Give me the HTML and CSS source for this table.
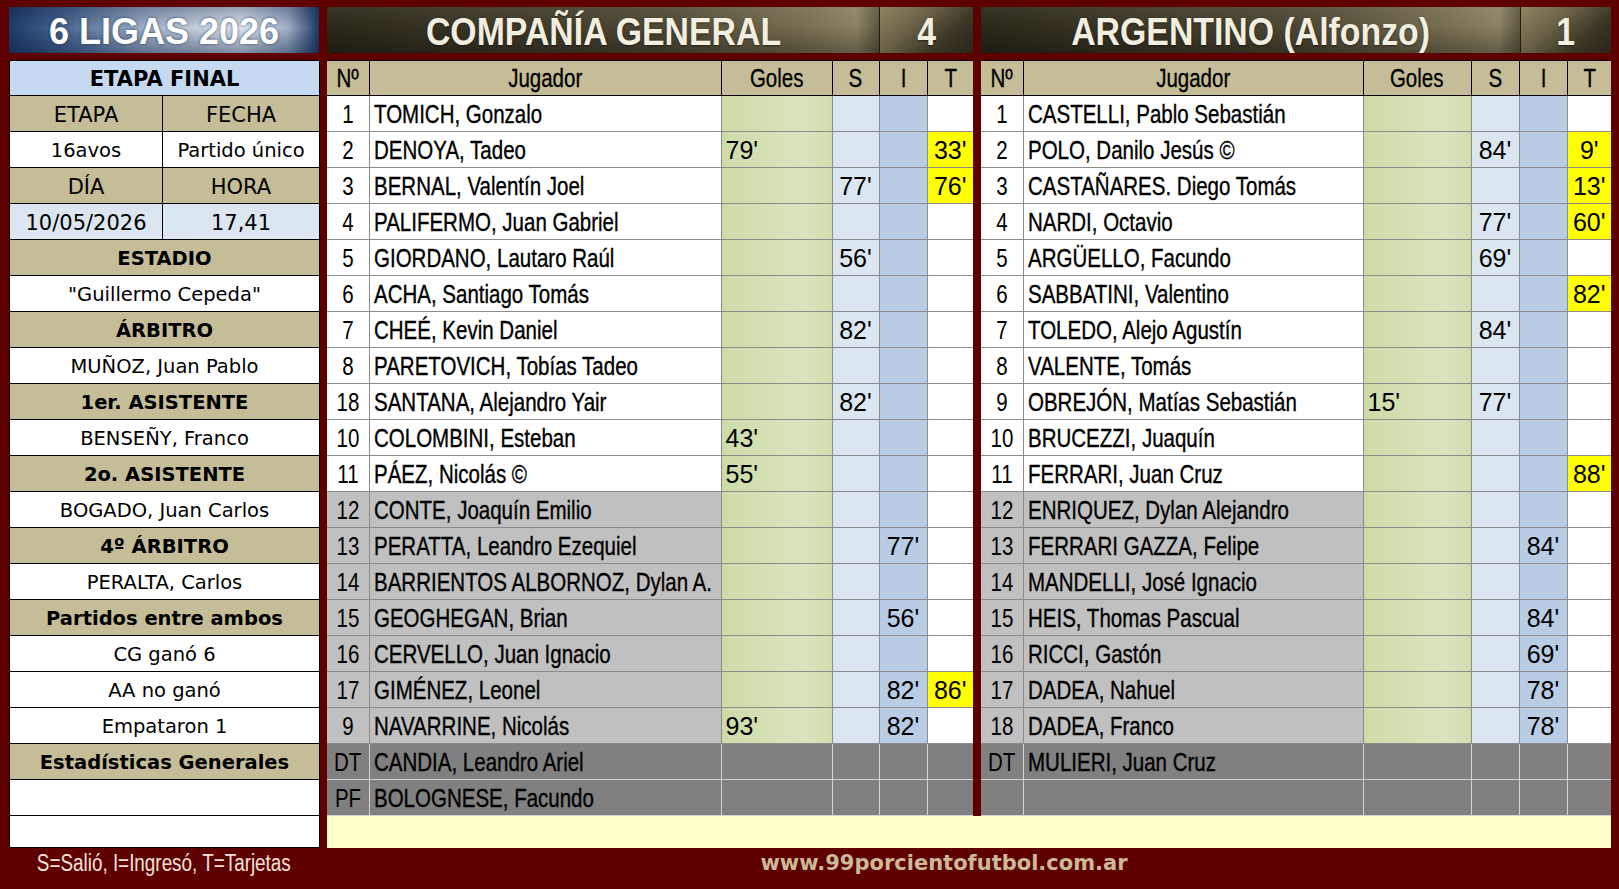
FILE: index.html
```html
<!DOCTYPE html>
<html lang="es">
<head>
<meta charset="utf-8">
<title>6 LIGAS 2026 - Compañía General vs Argentino</title>
<link rel="stylesheet" href="styles.css">
</head>
<body>
<div class="board">
  <section class="info">
    <h1 class="league">6 LIGAS 2026</h1>
    <table class="info-table">
      <colgroup><col class="ic1"><col class="ic2"></colgroup>
      <tr class="stage"><td colspan="2">ETAPA FINAL</td></tr>
      <tr class="lab"><td>ETAPA</td><td>FECHA</td></tr>
      <tr><td>16avos</td><td>Partido único</td></tr>
      <tr class="lab"><td>DÍA</td><td>HORA</td></tr>
      <tr class="date"><td>10/05/2026</td><td>17,41</td></tr>
      <tr class="sec"><td colspan="2">ESTADIO</td></tr>
      <tr><td colspan="2">"Guillermo Cepeda"</td></tr>
      <tr class="sec"><td colspan="2">ÁRBITRO</td></tr>
      <tr><td colspan="2">MUÑOZ, Juan Pablo</td></tr>
      <tr class="sec"><td colspan="2">1er. ASISTENTE</td></tr>
      <tr><td colspan="2">BENSEÑY, Franco</td></tr>
      <tr class="sec"><td colspan="2">2o. ASISTENTE</td></tr>
      <tr><td colspan="2">BOGADO, Juan Carlos</td></tr>
      <tr class="sec"><td colspan="2">4º ÁRBITRO</td></tr>
      <tr><td colspan="2">PERALTA, Carlos</td></tr>
      <tr class="sec"><td colspan="2">Partidos entre ambos</td></tr>
      <tr><td colspan="2">CG ganó 6</td></tr>
      <tr><td colspan="2">AA no ganó</td></tr>
      <tr><td colspan="2">Empataron 1</td></tr>
      <tr class="sec"><td colspan="2">Estadísticas Generales</td></tr>
      <tr><td colspan="2"></td></tr>
      <tr class="last"><td colspan="2"></td></tr>
    </table>
  </section>

  <section class="team team-a">
    <div class="team-head"><div class="team-name"><span class="nw">COMPAÑÍA GENERAL</span></div><div class="team-score"><span class="nw">4</span></div></div>
    <table class="roster">
      <colgroup><col class="cn"><col class="cname"><col class="cg"><col class="cs"><col class="ci"><col class="ct"></colgroup>
      <tr class="head"><th><span class="nw">Nº</span></th><th><span class="nw">Jugador</span></th><th><span class="nw">Goles</span></th><th><span class="nw">S</span></th><th><span class="nw">I</span></th><th><span class="nw">T</span></th></tr>
      <tr><td class="n"><span class="nw">1</span></td><td class="p"><span class="nw">TOMICH, Gonzalo</span></td><td class="g"></td><td class="s"></td><td class="i"></td><td class="t"></td></tr>
      <tr><td class="n"><span class="nw">2</span></td><td class="p"><span class="nw">DENOYA, Tadeo</span></td><td class="g">79'</td><td class="s"></td><td class="i"></td><td class="t card">33'</td></tr>
      <tr><td class="n"><span class="nw">3</span></td><td class="p"><span class="nw">BERNAL, Valentín Joel</span></td><td class="g"></td><td class="s">77'</td><td class="i"></td><td class="t card">76'</td></tr>
      <tr><td class="n"><span class="nw">4</span></td><td class="p"><span class="nw">PALIFERMO, Juan Gabriel</span></td><td class="g"></td><td class="s"></td><td class="i"></td><td class="t"></td></tr>
      <tr><td class="n"><span class="nw">5</span></td><td class="p"><span class="nw">GIORDANO, Lautaro Raúl</span></td><td class="g"></td><td class="s">56'</td><td class="i"></td><td class="t"></td></tr>
      <tr><td class="n"><span class="nw">6</span></td><td class="p"><span class="nw">ACHA, Santiago Tomás</span></td><td class="g"></td><td class="s"></td><td class="i"></td><td class="t"></td></tr>
      <tr><td class="n"><span class="nw">7</span></td><td class="p"><span class="nw">CHEÉ, Kevin Daniel</span></td><td class="g"></td><td class="s">82'</td><td class="i"></td><td class="t"></td></tr>
      <tr><td class="n"><span class="nw">8</span></td><td class="p"><span class="nw">PARETOVICH, Tobías Tadeo</span></td><td class="g"></td><td class="s"></td><td class="i"></td><td class="t"></td></tr>
      <tr><td class="n"><span class="nw">18</span></td><td class="p"><span class="nw">SANTANA, Alejandro Yair</span></td><td class="g"></td><td class="s">82'</td><td class="i"></td><td class="t"></td></tr>
      <tr><td class="n"><span class="nw">10</span></td><td class="p"><span class="nw">COLOMBINI, Esteban</span></td><td class="g">43'</td><td class="s"></td><td class="i"></td><td class="t"></td></tr>
      <tr><td class="n"><span class="nw">11</span></td><td class="p"><span class="nw">PÁEZ, Nicolás ©</span></td><td class="g">55'</td><td class="s"></td><td class="i"></td><td class="t"></td></tr>
      <tr class="sub"><td class="n"><span class="nw">12</span></td><td class="p"><span class="nw">CONTE, Joaquín Emilio</span></td><td class="g"></td><td class="s"></td><td class="i"></td><td class="t"></td></tr>
      <tr class="sub"><td class="n"><span class="nw">13</span></td><td class="p"><span class="nw">PERATTA, Leandro Ezequiel</span></td><td class="g"></td><td class="s"></td><td class="i">77'</td><td class="t"></td></tr>
      <tr class="sub"><td class="n"><span class="nw">14</span></td><td class="p"><span class="nw">BARRIENTOS ALBORNOZ, Dylan A.</span></td><td class="g"></td><td class="s"></td><td class="i"></td><td class="t"></td></tr>
      <tr class="sub"><td class="n"><span class="nw">15</span></td><td class="p"><span class="nw">GEOGHEGAN, Brian</span></td><td class="g"></td><td class="s"></td><td class="i">56'</td><td class="t"></td></tr>
      <tr class="sub"><td class="n"><span class="nw">16</span></td><td class="p"><span class="nw">CERVELLO, Juan Ignacio</span></td><td class="g"></td><td class="s"></td><td class="i"></td><td class="t"></td></tr>
      <tr class="sub"><td class="n"><span class="nw">17</span></td><td class="p"><span class="nw">GIMÉNEZ, Leonel</span></td><td class="g"></td><td class="s"></td><td class="i">82'</td><td class="t card">86'</td></tr>
      <tr class="sub"><td class="n"><span class="nw">9</span></td><td class="p"><span class="nw">NAVARRINE, Nicolás</span></td><td class="g">93'</td><td class="s"></td><td class="i">82'</td><td class="t"></td></tr>
      <tr class="staff"><td class="n"><span class="nw">DT</span></td><td class="p"><span class="nw">CANDIA, Leandro Ariel</span></td><td></td><td></td><td></td><td></td></tr>
      <tr class="staff"><td class="n"><span class="nw">PF</span></td><td class="p"><span class="nw">BOLOGNESE, Facundo</span></td><td></td><td></td><td></td><td></td></tr>
    </table>
  </section>

  <section class="team team-b">
    <div class="team-head"><div class="team-name"><span class="nw">ARGENTINO (Alfonzo)</span></div><div class="team-score"><span class="nw">1</span></div></div>
    <table class="roster">
      <colgroup><col class="cn"><col class="cname"><col class="cg"><col class="cs"><col class="ci"><col class="ct"></colgroup>
      <tr class="head"><th><span class="nw">Nº</span></th><th><span class="nw">Jugador</span></th><th><span class="nw">Goles</span></th><th><span class="nw">S</span></th><th><span class="nw">I</span></th><th><span class="nw">T</span></th></tr>
      <tr><td class="n"><span class="nw">1</span></td><td class="p"><span class="nw">CASTELLI, Pablo Sebastián</span></td><td class="g"></td><td class="s"></td><td class="i"></td><td class="t"></td></tr>
      <tr><td class="n"><span class="nw">2</span></td><td class="p"><span class="nw">POLO, Danilo Jesús ©</span></td><td class="g"></td><td class="s">84'</td><td class="i"></td><td class="t card">9'</td></tr>
      <tr><td class="n"><span class="nw">3</span></td><td class="p"><span class="nw">CASTAÑARES. Diego Tomás</span></td><td class="g"></td><td class="s"></td><td class="i"></td><td class="t card">13'</td></tr>
      <tr><td class="n"><span class="nw">4</span></td><td class="p"><span class="nw">NARDI, Octavio</span></td><td class="g"></td><td class="s">77'</td><td class="i"></td><td class="t card">60'</td></tr>
      <tr><td class="n"><span class="nw">5</span></td><td class="p"><span class="nw">ARGÜELLO, Facundo</span></td><td class="g"></td><td class="s">69'</td><td class="i"></td><td class="t"></td></tr>
      <tr><td class="n"><span class="nw">6</span></td><td class="p"><span class="nw">SABBATINI, Valentino</span></td><td class="g"></td><td class="s"></td><td class="i"></td><td class="t card">82'</td></tr>
      <tr><td class="n"><span class="nw">7</span></td><td class="p"><span class="nw">TOLEDO, Alejo Agustín</span></td><td class="g"></td><td class="s">84'</td><td class="i"></td><td class="t"></td></tr>
      <tr><td class="n"><span class="nw">8</span></td><td class="p"><span class="nw">VALENTE, Tomás</span></td><td class="g"></td><td class="s"></td><td class="i"></td><td class="t"></td></tr>
      <tr><td class="n"><span class="nw">9</span></td><td class="p"><span class="nw">OBREJÓN, Matías Sebastián</span></td><td class="g">15'</td><td class="s">77'</td><td class="i"></td><td class="t"></td></tr>
      <tr><td class="n"><span class="nw">10</span></td><td class="p"><span class="nw">BRUCEZZI, Juaquín</span></td><td class="g"></td><td class="s"></td><td class="i"></td><td class="t"></td></tr>
      <tr><td class="n"><span class="nw">11</span></td><td class="p"><span class="nw">FERRARI, Juan Cruz</span></td><td class="g"></td><td class="s"></td><td class="i"></td><td class="t card">88'</td></tr>
      <tr class="sub"><td class="n"><span class="nw">12</span></td><td class="p"><span class="nw">ENRIQUEZ, Dylan Alejandro</span></td><td class="g"></td><td class="s"></td><td class="i"></td><td class="t"></td></tr>
      <tr class="sub"><td class="n"><span class="nw">13</span></td><td class="p"><span class="nw">FERRARI GAZZA, Felipe</span></td><td class="g"></td><td class="s"></td><td class="i">84'</td><td class="t"></td></tr>
      <tr class="sub"><td class="n"><span class="nw">14</span></td><td class="p"><span class="nw">MANDELLI, José Ignacio</span></td><td class="g"></td><td class="s"></td><td class="i"></td><td class="t"></td></tr>
      <tr class="sub"><td class="n"><span class="nw">15</span></td><td class="p"><span class="nw">HEIS, Thomas Pascual</span></td><td class="g"></td><td class="s"></td><td class="i">84'</td><td class="t"></td></tr>
      <tr class="sub"><td class="n"><span class="nw">16</span></td><td class="p"><span class="nw">RICCI, Gastón</span></td><td class="g"></td><td class="s"></td><td class="i">69'</td><td class="t"></td></tr>
      <tr class="sub"><td class="n"><span class="nw">17</span></td><td class="p"><span class="nw">DADEA, Nahuel</span></td><td class="g"></td><td class="s"></td><td class="i">78'</td><td class="t"></td></tr>
      <tr class="sub"><td class="n"><span class="nw">18</span></td><td class="p"><span class="nw">DADEA, Franco</span></td><td class="g"></td><td class="s"></td><td class="i">78'</td><td class="t"></td></tr>
      <tr class="staff"><td class="n"><span class="nw">DT</span></td><td class="p"><span class="nw">MULIERI, Juan Cruz</span></td><td></td><td></td><td></td><td></td></tr>
      <tr class="staff"><td class="n"></td><td class="p"></td><td></td><td></td><td></td><td></td></tr>
    </table>
  </section>

  <div class="notes"></div>
  <div class="legend"><span class="nw">S=Salió, I=Ingresó, T=Tarjetas</span></div>
  <div class="site">www.99porcientofutbol.com.ar</div>
</div>
</body>
</html>
```

FILE: styles.css
```css
* { box-sizing: border-box; }

body {
  margin: 0;
  background: #5e0000;
  font-family: "Liberation Sans", Arial, sans-serif;
  color: #000;
}

.board {
  display: grid;
  grid-template-columns: 310px 646px 630px;
  grid-template-rows: auto 32px 42px;
  column-gap: 8px;
  padding: 7px 0 0 9px;
}

/* narrow text: Arial Narrow metrics = Arial scaled to 82% */
.nw {
  display: inline-block;
  transform: scaleX(0.82);
  transform-origin: 0 50%;
  white-space: nowrap;
}

/* ---------- left info panel ---------- */
.info {
  grid-column: 1;
  grid-row: 1 / span 2;
  display: flex;
  flex-direction: column;
}

.league {
  margin: 0 0 7px;
  height: 46px;
  padding-top: 4px;
  font: bold 36px/42px "Liberation Sans", Arial, sans-serif;
  color: #fff;
  text-align: center;
  text-shadow: 0 0 3px rgba(20, 40, 80, 0.8);
  background:
    linear-gradient(180deg, rgba(10, 30, 70, 0.35) 0%, rgba(255, 255, 255, 0) 45%, rgba(10, 30, 70, 0.45) 100%),
    linear-gradient(90deg, #1e3a66 0%, #4a6790 18%, #a7b6ca 45%, #e2e8ef 75%, #9fb0c6 90%, #1d3862 100%);
}

.info-table {
  width: 310px;
  border-collapse: collapse;
  table-layout: fixed;
  font-family: "DejaVu Sans", Verdana, sans-serif;
  font-size: 19.5px;
}

.ic1 { width: 153px; }
.ic2 { width: 157px; }

.info-table tr { height: 36px; }
.info-table tr.stage { height: 35px; }
.info-table tr.last { height: 32px; }

.info-table td {
  border: 1px solid #000;
  background: #fff;
  text-align: center;
  padding: 2px 1px 0;
  white-space: nowrap;
  overflow: hidden;
}

.info-table .stage td {
  background: #c5d9f1;
  font-weight: bold;
  font-size: 21px;
}

.info-table .lab td { background: #c4bd97; font-size: 21px; }
.info-table .sec td { background: #c4bd97; font-weight: bold; font-size: 19.5px; }
.info-table .date td { background: #dce6f1; font-size: 21px; }

/* ---------- team panels ---------- */
.team {
  grid-row: 1;
  display: flex;
  flex-direction: column;
}
.team-a { grid-column: 2; }
.team-b { grid-column: 3; }

.team-head {
  display: flex;
  height: 46px;
  margin-bottom: 7px;
}

.team-name,
.team-score {
  padding-top: 4px;
  font: bold 38px/42px "Liberation Sans", Arial, sans-serif;
  color: #f2eee0;
  text-align: center;
  text-shadow: 0 1px 2px rgba(0, 0, 0, 0.5);
  overflow: hidden;
}
.team-name .nw,
.team-score .nw { transform: scaleX(0.89); transform-origin: 50% 50%; }

.team-name {
  flex: 1;
  background:
    linear-gradient(180deg, rgba(255, 255, 255, 0.06) 0%, rgba(0, 0, 0, 0) 40%, rgba(0, 0, 0, 0.3) 100%),
    linear-gradient(90deg, #2b2719 0%, #3d3827 30%, #4e4834 60%, #756d50 85%, #8b8363 96%, #5d5640 100%);
}

.team-score {
  border-left: 1px solid #1f1c12;
  background: linear-gradient(140deg, #8e8663 0%, #6c6449 35%, #3a3525 70%, #29251a 100%);
}
.team-a .team-score { width: 94px; }
.team-b .team-score { width: 91px; }

.roster {
  border-collapse: collapse;
  table-layout: fixed;
  font-family: "Liberation Sans", Arial, sans-serif;
  font-size: 25px;
}
.team-a .roster { width: 646px; }
.team-b .roster { width: 630px; }

.cn { width: 42px; }
.team-a .cname { width: 352px; }
.team-a .cg { width: 111px; }
.team-a .cs { width: 47px; }
.team-a .ci { width: 48px; }
.team-a .ct { width: 46px; }
.team-b .cname { width: 340px; }
.team-b .cg { width: 108px; }
.team-b .cs { width: 48px; }
.team-b .ci { width: 48px; }
.team-b .ct { width: 44px; }

.roster tr { height: 36px; }
.roster tr.head { height: 35px; }

.roster th {
  background: #c4bd97;
  border: 1px solid #000;
  font-weight: normal;
  text-align: center;
  padding: 0;
  overflow: hidden;
  white-space: nowrap;
  -webkit-text-stroke: 0.3px #000;
}
.roster th .nw { transform-origin: 50% 50%; }
.roster tr.head th:first-child { border-left: 0; }
.roster tr.head th:last-child { border-right: 0; }

.roster td {
  border: 1px solid #8c8c8c;
  background: #fff;
  padding: 0;
  white-space: nowrap;
  overflow: hidden;
  line-height: 34px;
}
.roster td:first-child { border-left: 0; }
.roster td:last-child { border-right: 0; }

.roster td.n { text-align: center; }
.roster td.n .nw { transform-origin: 50% 50%; }
.roster td.p { padding-left: 4px; }
.roster td.p .nw { -webkit-text-stroke: 0.35px #000; }

.roster td.g,
.roster td.s,
.roster td.i,
.roster td.t {
  font-size: 25px;
}
.roster td.g {
  padding-left: 4px;
  background: linear-gradient(90deg, #cddba8 0%, #d6e2b8 55%, #d9e4bf 75%, #d0deae 100%);
}
.roster td.s { background: #dce6f1; text-align: center; }
.roster td.i { background: #b8cce4; text-align: center; }
.roster td.t { text-align: center; }
.roster td.card { background: #ffff00; }

.roster tr.sub td.n,
.roster tr.sub td.p { background: #c0c0c0; }

.roster tr.staff td {
  background: #808080;
  border-color: #d4d4d4;
}

/* ---------- bottom strip & footer ---------- */
.notes {
  grid-column: 2 / span 2;
  grid-row: 2;
  background: #ffffcc;
}

.legend {
  grid-column: 1;
  grid-row: 3;
  text-align: center;
  font: 23px/30px "Liberation Sans", Arial, sans-serif;
  color: #f3e2dc;
}
.legend .nw { transform-origin: 50% 50%; }

.site {
  grid-column: 2 / span 2;
  grid-row: 3;
  text-align: center;
  padding-right: 50px;
  font: bold 21px/30px "DejaVu Sans", Verdana, sans-serif;
  color: #cbb997;
}
```
